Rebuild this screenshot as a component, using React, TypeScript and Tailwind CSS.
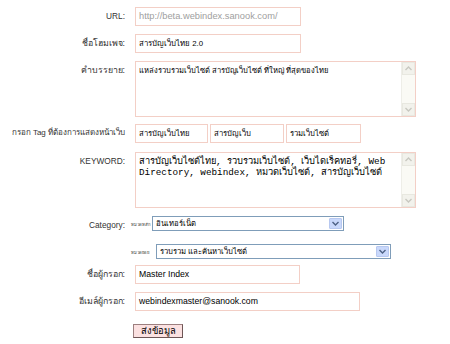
import React from 'react';

const font = 'font-["Tahoma","Liberation_Sans","Noto_Sans",sans-serif]';

const Label: React.FC<{ children: React.ReactNode; size: string }> = ({ children, size }) => (
  <div className={`flex w-[125px] shrink-0 justify-end pt-[3px] leading-[12px] text-[#333] whitespace-nowrap ${size}`}>
    {children}
  </div>
);

const TextBox: React.FC<{ value: string; width: string; size: string; muted?: boolean }> = ({
  value,
  width,
  size,
  muted,
}) => (
  <div
    className={`${width} ${size} h-[19px] border border-[#f3cfc6] bg-white px-[3px] leading-[17px] whitespace-nowrap overflow-hidden ${
      muted ? 'text-[#a0a0a0]' : 'text-black'
    }`}
  >
    {value}
  </div>
);

const Chevron: React.FC<{ up?: boolean; color: string }> = ({ up, color }) => (
  <svg width="7" height="5" viewBox="0 0 7 5">
    <path d={up ? 'M0.5 4 L3.5 1 L6.5 4' : 'M0.5 1 L3.5 4 L6.5 1'} fill="none" stroke={color} strokeWidth="1.4" />
  </svg>
);

const TextArea: React.FC<{ children: React.ReactNode; mono?: boolean }> = ({ children, mono }) => (
  <div className="flex h-[56px] w-[281px] border border-[#f3cfc6] bg-white">
    <div
      className={`flex-1 overflow-hidden px-[3px] pt-[3px] text-black whitespace-nowrap ${
        mono ? 'font-["Liberation_Mono","DejaVu_Sans_Mono",monospace] text-[9.3px] leading-[11px]' : 'text-[7.6px] leading-[12px]'
      }`}
    >
      {children}
    </div>
    <div className="flex w-[14px] flex-col justify-between border-l border-[#eeeee8] bg-[#fafaf5]">
      <div className="flex h-[13px] items-center justify-center border border-[#e8e8e0] bg-[#f2f2ec]">
        <Chevron up color="#c8c8c0" />
      </div>
      <div className="flex h-[13px] items-center justify-center border border-[#e8e8e0] bg-[#f2f2ec]">
        <Chevron color="#c8c8c0" />
      </div>
    </div>
  </div>
);

const Select: React.FC<{ value: string; width: string }> = ({ value, width }) => (
  <div className={`${width} flex h-[15px] items-center border border-[#7f9db9] bg-white`}>
    <div className="flex-1 overflow-hidden px-[3px] text-[7.7px] leading-[13px] text-black whitespace-nowrap">{value}</div>
    <div className="mr-[1px] flex h-[11px] w-[13px] items-center justify-center rounded-[1px] border border-[#b7c8f0] bg-[#c9d8fb]">
      <Chevron color="#4d6185" />
    </div>
  </div>
);

export default function App() {
  return (
    <div className={`${font} h-[344px] w-[450px] bg-white pt-[7px]`}>
      <div className="flex flex-col">
        <div className="flex gap-[10px]">
          <Label size="text-[8.3px]">URL:</Label>
          <TextBox value="http://beta.webindex.sanook.com/" width="w-[166px]" size="text-[9.3px]" muted />
        </div>
        <div className="mt-[8px] flex gap-[10px]">
          <Label size="text-[8.8px]">ชื่อโฮมเพจ:</Label>
          <TextBox value="สารบัญเว็บไทย 2.0" width="w-[166px]" size="text-[7.8px]" />
        </div>
        <div className="mt-[8px] flex gap-[10px]">
          <Label size="text-[8.8px]">คำบรรยาย:</Label>
          <TextArea>แหล่งรวบรวมเว็บไซต์ สารบัญเว็บไซต์ ที่ใหญ่ ที่สุดของไทย</TextArea>
        </div>
        <div className="mt-[7px] flex gap-[10px]">
          <Label size="text-[8px]">กรอก Tag ที่ต้องการแสดงหน้าเว็บ</Label>
          <div className="flex gap-[2px]">
            <TextBox value="สารบัญเว็บไทย" width="w-[73px]" size="text-[7.7px]" />
            <TextBox value="สารบัญเว็บ" width="w-[74px]" size="text-[7.7px]" />
            <TextBox value="รวมเว็บไซต์" width="w-[75px]" size="text-[7.7px]" />
          </div>
        </div>
        <div className="mt-[9px] flex gap-[10px]">
          <Label size="text-[8.3px]">KEYWORD:</Label>
          <TextArea mono>
            สารบัญเว็บไซต์ไทย, รวบรวมเว็บไซต์, เว็บไดเร็คทอรี่, Web
            <br />
            Directory, webindex, หมวดเว็บไซต์, สารบัญเว็บไซต์
          </TextArea>
        </div>
        <div className="mt-[8px] flex gap-[6px]">
          <Label size="text-[8.3px]">Category:</Label>
          <div className="flex items-end gap-[1px]">
            <span className="pb-[3px] text-[4.2px] leading-[6px] text-[#333]">หมวดหลัก</span>
            <Select value="อินเทอร์เน็ต" width="w-[192px]" />
          </div>
        </div>
        <div className="mt-[13px] flex gap-[6px]">
          <div className="w-[125px] shrink-0" />
          <div className="flex items-end gap-[7px]">
            <span className="pb-[3px] text-[4.2px] leading-[6px] text-[#333]">หมวดย่อย</span>
            <Select value="รวบรวม และค้นหาเว็บไซต์" width="w-[235px]" />
          </div>
        </div>
        <div className="mt-[6px] flex gap-[10px]">
          <Label size="text-[8.8px]">ชื่อผู้กรอก:</Label>
          <TextBox value="Master Index" width="w-[165px]" size="text-[8.7px]" />
        </div>
        <div className="mt-[8px] flex gap-[10px]">
          <Label size="text-[8.8px]">อีเมล์ผู้กรอก:</Label>
          <TextBox value="webindexmaster@sanook.com" width="w-[225px]" size="text-[8.7px]" />
        </div>
        <div className="mt-[13px] flex gap-[8px]">
          <div className="w-[125px] shrink-0" />
          <div className="h-[14px] w-[50px] border border-[#9c7f7f] border-r-[#6e5656] border-b-[#6e5656] bg-[#fbe1e1] text-center text-[9.4px] leading-[12px] text-black">
            ส่งข้อมูล
          </div>
        </div>
      </div>
    </div>
  );
}
